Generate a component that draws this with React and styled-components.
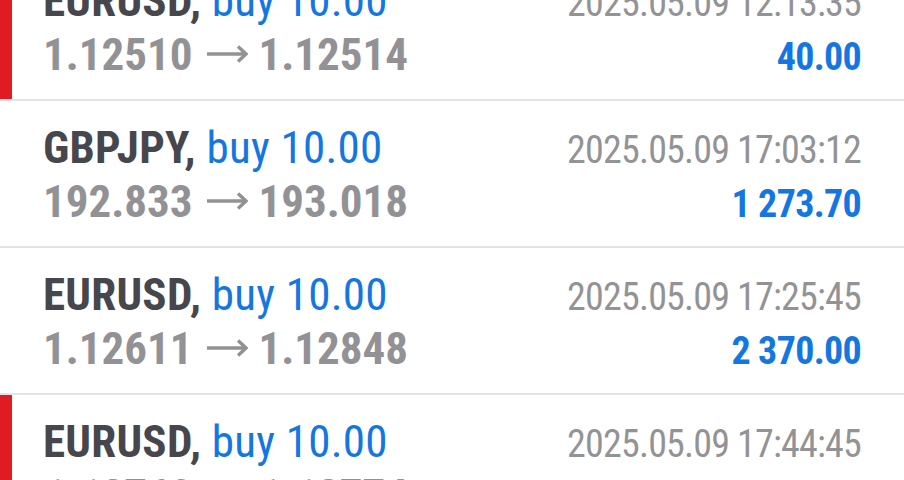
import React from "react";
import styled, { createGlobalStyle } from "styled-components";

const GlobalStyle = createGlobalStyle`
  html, body {
    margin: 0;
    padding: 0;
    background: #ffffff;
    overflow: hidden;
  }
  body {
    font-family: "Roboto Condensed", Roboto, "Liberation Sans", sans-serif;
    font-stretch: condensed;
  }
`;

const List = styled.div`
  width: 904px;
  height: 480px;
  overflow: hidden;
  background: #ffffff;
`;

// first deal is scrolled partly out of view
const Track = styled.div`
  margin-top: -46px;
`;

const Row = styled.div`
  box-sizing: border-box;
  height: 147px;
  padding: 21px 43px 0 43px;
  border-bottom: 2px solid #e4e4e6;
  box-shadow: ${(p) => (p.$loss ? "inset 12px 0 0 #e01b22" : "none")};
  display: flex;
  flex-direction: column;
`;

const Line = styled.div`
  display: flex;
  justify-content: space-between;
  align-items: baseline;
  line-height: 52px;
  white-space: nowrap;
`;

const Title = styled.div`
  font-size: 45px;
  font-weight: 700;
  letter-spacing: 0.25px;
  color: #46464c;
`;

const Side = styled.span`
  font-weight: 400;
  color: #1476e0;
`;

const Prices = styled.div`
  font-size: 45px;
  font-weight: 700;
  color: #929296;
`;

const ArrowIcon = styled.svg`
  display: inline-block;
  width: 42px;
  height: 18px;
  margin: 0 11px 0 13px;
  vertical-align: 7px;
`;

const Arrow = () => (
  <ArrowIcon viewBox="0 0 42 18" fill="none" stroke="#929296" strokeWidth="3.4">
    <path d="M1 9H40" />
    <path d="M32 1.5L40 9L32 16.5" strokeLinejoin="miter" />
  </ArrowIcon>
);

const Time = styled.div`
  font-size: 38px;
  letter-spacing: -0.8px;
  color: #939396;
`;

const Profit = styled.div`
  font-size: 38px;
  letter-spacing: -0.7px;
  font-weight: 700;
  color: #1476e0;
`;

const deals = [
  { symbol: "EURUSD", side: "buy 10.00", open: "1.12510", close: "1.12514", time: "2025.05.09 12:13:35", profit: "40.00", loss: true },
  { symbol: "GBPJPY", side: "buy 10.00", open: "192.833", close: "193.018", time: "2025.05.09 17:03:12", profit: "1 273.70" },
  { symbol: "EURUSD", side: "buy 10.00", open: "1.12611", close: "1.12848", time: "2025.05.09 17:25:45", profit: "2 370.00" },
  { symbol: "EURUSD", side: "buy 10.00", open: "1.12760", close: "1.12774", time: "2025.05.09 17:44:45", profit: "140.00", loss: true },
];

export default function App() {
  return (
    <>
      <GlobalStyle />
      <List>
        <Track>
          {deals.map((d, i) => (
            <Row key={i} $loss={d.loss}>
              <Line>
                <Title>
                  {d.symbol}, <Side>{d.side}</Side>
                </Title>
                <Time>{d.time}</Time>
              </Line>
              <Line>
                <Prices>
                  {d.open}
                  <Arrow />
                  {d.close}
                </Prices>
                <Profit>{d.profit}</Profit>
              </Line>
            </Row>
          ))}
        </Track>
      </List>
    </>
  );
}
